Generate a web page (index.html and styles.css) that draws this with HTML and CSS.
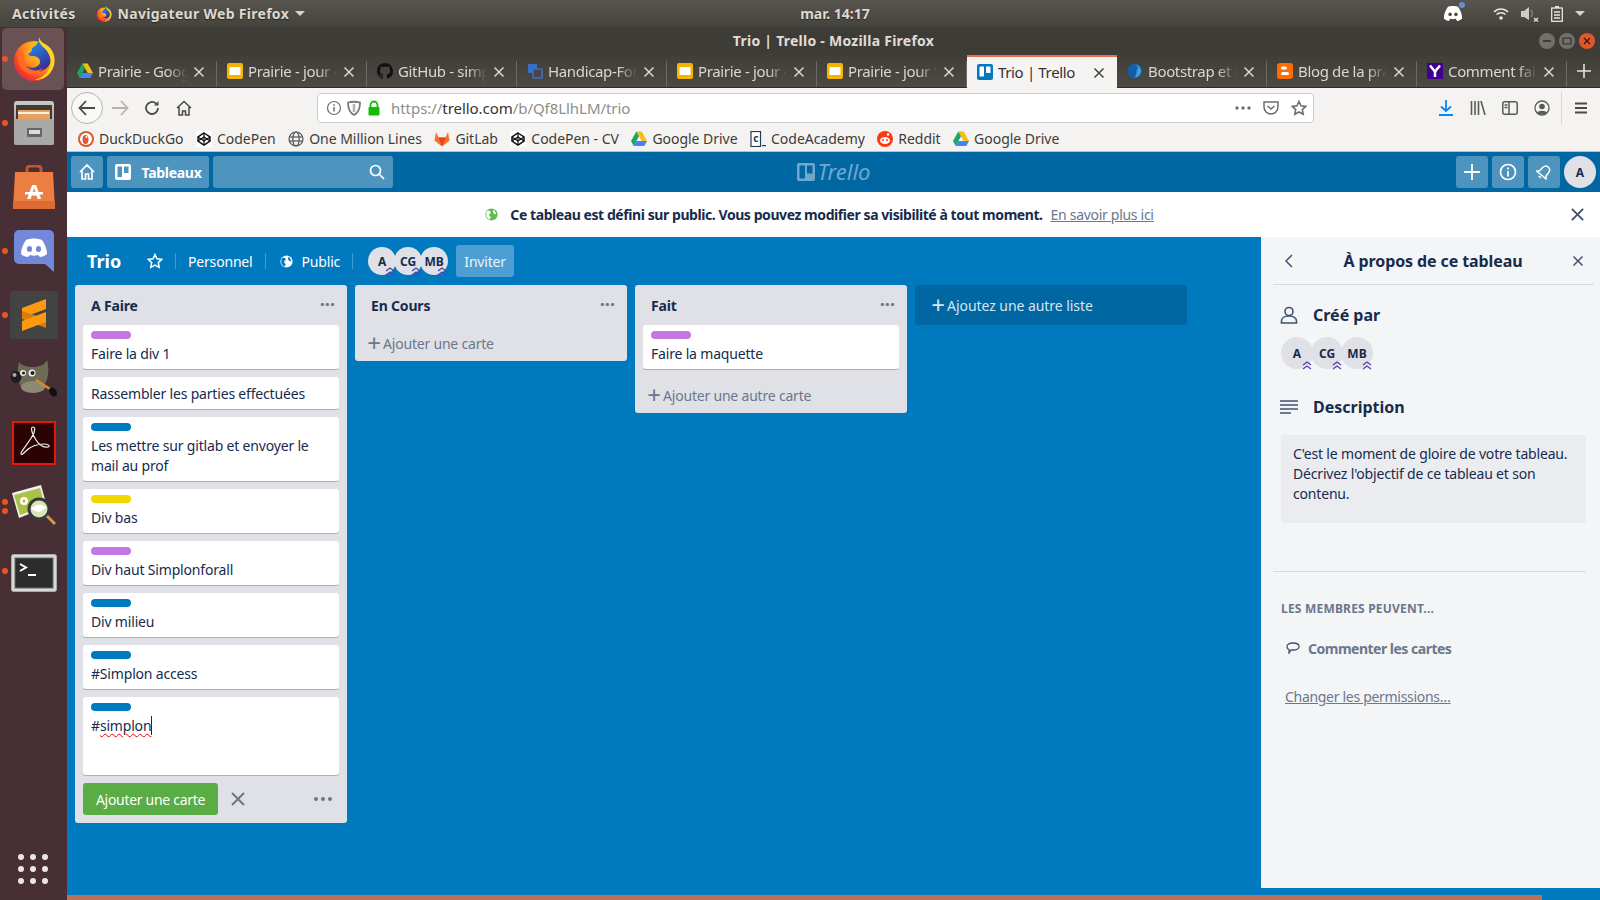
FILE: index.html
```html
<!DOCTYPE html>
<html lang="fr">
<head>
  <meta charset="UTF-8">
  <title>Trio | Trello</title>
  <link rel="stylesheet" href="styles.css">
</head>
<body>

  <svg class="defs" width="0" height="0">
    <defs>
      <radialGradient id="ffOrange" cx="0.75" cy="0.2" r="1">
        <stop offset="0" stop-color="#ffe11a"/>
        <stop offset="0.45" stop-color="#ff9a1f"/>
        <stop offset="0.8" stop-color="#f5392a"/>
        <stop offset="1" stop-color="#d8166a"/>
      </radialGradient>
      <linearGradient id="ffBlue" x1="0" y1="0" x2="0.6" y2="1">
        <stop offset="0" stop-color="#1f9bf0"/>
        <stop offset="1" stop-color="#3a2a96"/>
      </linearGradient>
      <linearGradient id="metal" x1="0" y1="0" x2="0" y2="1">
        <stop offset="0" stop-color="#c9c9c7"/>
        <stop offset="1" stop-color="#8b8b89"/>
      </linearGradient>
      <symbol id="i-firefox" viewBox="0 0 44 44">
        <circle cx="22" cy="24" r="20" fill="url(#ffOrange)"/>
        <path d="M26 5c9 1 15 10 13 19-2 8-11 13-19 10-3-1-5-3-6-5 5 3 12 2 14-3 1-4-3-7-7-7-2 0-4 0-5-2 3-1 4-3 4-6 2-1 5-3 6-6z" fill="url(#ffBlue)"/>
        <path d="M27 0c1 6 8 7 12 12 5 7 5 17-1 24-4 5-10 7-15 7 7-2 13-7 15-14 2-9-2-15-7-19-3-3-5-6-4-10z" fill="#ffd41f"/>
        <path d="M14 29c4 5 12 6 17 2-3 6-14 8-20 2-6-6-6-16-1-21 0 3 1 5 3 7-2 3-1 7 1 10z" fill="#ff6a1f"/>
      </symbol>
      <symbol id="i-cabinet" viewBox="0 0 40 44">
        <rect x="0" y="0" width="40" height="44" rx="3" fill="url(#metal)"/>
        <rect x="2" y="4" width="36" height="15" fill="#3d3a38"/>
        <rect x="4" y="9" width="32" height="10" fill="#e8a05a"/>
        <rect x="4" y="11" width="31" height="2" fill="#fff3e0"/>
        <rect x="0" y="18" width="40" height="26" rx="2" fill="#a9a9a7"/>
        <rect x="13" y="27" width="15" height="9" rx="1" fill="#666"/>
        <rect x="15" y="29" width="11" height="4" fill="#ddd"/>
      </symbol>
      <symbol id="i-bag" viewBox="0 0 42 44">
        <path d="M14 8V4a3 3 0 013-3h8a3 3 0 013 3v4" fill="none" stroke="#c7552a" stroke-width="3"/>
        <path d="M2 7h38l2 37H0z" fill="#ec7d43"/>
        <rect x="0" y="36" width="42" height="8" fill="#e06a33"/>
        <text x="21" y="34" text-anchor="middle" class="bag-a">A</text>
        <rect x="12" y="27" width="18" height="2.500" fill="#fff"/>
      </symbol>
      <symbol id="i-discord" viewBox="0 0 40 42">
        <path d="M5 0h30a5 5 0 015 5v37l-9-8H5a5 5 0 01-5-5V5a5 5 0 015-5z" fill="#7289da"/>
        <path d="M12 10c5-2 11-2 16 0 3 4 5 9 5 14-2 2-5 3-7 3l-2-2c-3 1-5 1-8 0l-2 2c-2 0-5-1-7-3 0-5 2-10 5-14z" fill="#fff"/>
        <ellipse cx="15.500" cy="19" rx="2.600" ry="3" fill="#7289da"/>
        <ellipse cx="24.500" cy="19" rx="2.600" ry="3" fill="#7289da"/>
      </symbol>
      <symbol id="i-discord-mono" viewBox="0 0 24 18">
        <path d="M6 1c4-1.500 8-1.500 12 0 3 4 5 9 5 14-2 2-4 3-6 3l-2-3c-2 1-4 1-6 0l-2 3c-2 0-4-1-6-3 0-5 2-10 5-14z" fill="#fff"/>
        <ellipse cx="8.500" cy="10" rx="2" ry="2.300" fill="#4c4a44"/>
        <ellipse cx="15.500" cy="10" rx="2" ry="2.300" fill="#4c4a44"/>
      </symbol>
      <symbol id="i-sublime" viewBox="0 0 48 48">
        <rect width="48" height="48" rx="3" fill="#434343"/>
        <polygon points="12,17 36,8 36,18 12,27" fill="#ff9a10"/>
        <polygon points="12,20 36,28 36,37 12,28" fill="#d97c0a"/>
        <polygon points="12,30 36,21 36,31 12,40" fill="#ff9a10"/>
      </symbol>
      <symbol id="i-gimp" viewBox="0 0 48 42">
        <path d="M9 4c4 5 11 5 17 5 5-1 9-3 11-7 3 10 1 22-5 28-6 6-16 5-21-1C7 22 7 12 9 4z" fill="#6d6a55"/>
        <ellipse cx="23" cy="29" rx="12" ry="6" fill="#8d8a74"/>
        <ellipse cx="6" cy="19" rx="5.500" ry="6" fill="#1d1d1d"/>
        <ellipse cx="4.500" cy="17" rx="2" ry="2" fill="#aaa"/>
        <circle cx="13" cy="15" r="3" fill="#eee"/>
        <circle cx="22" cy="15" r="3.500" fill="#eee"/>
        <circle cx="13.500" cy="15" r="1.600" fill="#222"/>
        <circle cx="22.500" cy="15" r="2" fill="#222"/>
        <line x1="26" y1="22" x2="40" y2="31" stroke="#d98a2b" stroke-width="2.500"/>
        <ellipse cx="43" cy="34" rx="3.500" ry="5" fill="#111" transform="rotate(-35 43 34)"/>
      </symbol>
      <symbol id="i-acrobat" viewBox="0 0 44 44">
        <rect x="1" y="1" width="42" height="42" fill="#2b0303" stroke="#e5170b" stroke-width="2"/>
        <path d="M9 32c3-6 8-10 13-20 1-4 1-6-1-6-3 0-1 7 3 13 3 5 8 8 12 7 3-1 0-3-4-3-7 0-14 3-18 7-3 3-5 5-5 2z" fill="none" stroke="#eee" stroke-width="1.200"/>
      </symbol>
      <symbol id="i-viewer" viewBox="0 0 44 44">
        <polygon points="0,8 29,0 35,22 7,33" fill="#f2f2ea"/>
        <polygon points="2,10 28,3 33,21 8,30" fill="#a9c14b"/>
        <circle cx="12" cy="16" r="4" fill="#fff"/>
        <circle cx="12" cy="16" r="1.500" fill="#f0a020"/>
        <circle cx="27" cy="24" r="10" fill="#d9e4b6" stroke="#38393a" stroke-width="3"/>
        <path d="M19 24c3-4 7-5 10-4 2 0 4 2 6 3-3 0-6 4-8 4-3 0-5-2-8-3z" fill="#fff"/>
        <line x1="35" y1="31" x2="43" y2="39" stroke="#d19a4c" stroke-width="3"/>
      </symbol>
      <symbol id="i-terminal" viewBox="0 0 46 38">
        <rect x="0.500" y="0.500" width="45" height="37" rx="2" fill="#d8d8d6" stroke="#aaa"/>
        <rect x="4" y="4" width="38" height="30" fill="#2c2c2c" stroke="#666"/>
        <polyline points="9,10 15,13.500 9,17" fill="none" stroke="#fff" stroke-width="2"/>
        <rect x="17" y="20" width="8" height="2" fill="#fff"/>
      </symbol>
      <symbol id="i-drive" viewBox="0 0 16 15">
        <polygon points="5.300,0 10.700,0 16,9.500 10.700,9.500" fill="#f9bc15"/>
        <polygon points="5.300,0 8,4.800 2.700,14.500 0,9.500" fill="#1fa463"/>
        <polygon points="5.400,9.500 16,9.500 13.300,14.500 2.700,14.500" fill="#4285f4"/>
      </symbol>
      <symbol id="i-slides" viewBox="0 0 16 16">
        <rect width="16" height="16" rx="2" fill="#f4b400"/>
        <rect x="2.500" y="4" width="11" height="8" fill="#fff"/>
      </symbol>
      <symbol id="i-trello" viewBox="0 0 16 16">
        <rect width="16" height="16" rx="2" fill="#0079bf"/>
        <rect x="2.500" y="2.500" width="4.500" height="10" rx="0.500" fill="#fff"/>
        <rect x="9" y="2.500" width="4.500" height="6.500" rx="0.500" fill="#fff"/>
      </symbol>
      <symbol id="i-github" viewBox="0 0 16 16">
        <path fill="#111" d="M8 0C3.580 0 0 3.580 0 8c0 3.540 2.290 6.530 5.470 7.590.4.070.55-.17.55-.38 0-.19-.01-.82-.01-1.490-2.010.37-2.530-.49-2.690-.94-.09-.23-.48-.94-.82-1.130-.28-.15-.68-.52-.01-.53.63-.01 1.080.58 1.230.82.72 1.210 1.870.87 2.330.66.070-.52.28-.87.51-1.070-1.780-.2-3.640-.89-3.640-3.950 0-.87.31-1.590.82-2.150-.08-.2-.36-1.020.08-2.120 0 0 .67-.21 2.200.82.64-.18 1.320-.27 2-.27s1.360.09 2 .27c1.530-1.040 2.200-.82 2.200-.82.44 1.100.16 1.920.08 2.120.51.56.82 1.270.82 2.150 0 3.070-1.870 3.750-3.650 3.950.29.25.54.73.54 1.480 0 1.070-.01 1.930-.01 2.200 0 .21.15.46.55.38A8.013 8.013 0 0016 8c0-4.420-3.580-8-8-8z"/>
      </symbol>
      <symbol id="i-squares" viewBox="0 0 16 16">
        <rect x="1" y="1" width="9" height="9" fill="#3b6fc4"/>
        <rect x="6" y="6" width="9" height="9" fill="#4a4740" stroke="#3b6fc4" stroke-width="1.500"/>
      </symbol>
      <symbol id="i-earth" viewBox="0 0 16 16">
        <circle cx="8" cy="8" r="7.500" fill="#125fa8"/>
        <path d="M8 1.500c3 1 3.500 3.500 2 5.500-1 1 0 3-1 5-.5 1-1 2-1.500 2.500 3.500 0 6.500-3 6.500-6.500S11 1.500 8 1.500z" fill="#4f9bd8"/>
      </symbol>
      <symbol id="i-blogger" viewBox="0 0 16 16">
        <rect width="16" height="16" rx="3" fill="#ff6d00"/>
        <rect x="4" y="3.500" width="6" height="3" rx="1.500" fill="#fff"/>
        <rect x="4" y="9" width="8" height="3" rx="1.500" fill="#fff"/>
      </symbol>
      <symbol id="i-yahoo" viewBox="0 0 16 16">
        <rect width="16" height="16" fill="#410093"/>
        <polyline points="3,2.500 8,8.500 13,2.500" fill="none" stroke="#fff" stroke-width="2.500"/>
        <line x1="8" y1="8" x2="8" y2="14" stroke="#fff" stroke-width="2.500"/>
      </symbol>
      <symbol id="i-ddg" viewBox="0 0 16 16">
        <circle cx="8" cy="8" r="8" fill="#de5833"/>
        <circle cx="8" cy="8" r="6" fill="#fff"/>
        <ellipse cx="7.500" cy="8.500" rx="3" ry="4.500" fill="#de5833"/>
        <circle cx="8.500" cy="6" r="1" fill="#fff"/>
      </symbol>
      <symbol id="i-codepen" viewBox="0 0 16 16">
        <rect width="16" height="16" fill="#fff"/>
        <polygon points="8,2 14,6 14,10 8,14 2,10 2,6" fill="none" stroke="#111" stroke-width="1.500"/>
        <polyline points="2,6 8,10 14,6" fill="none" stroke="#111" stroke-width="1.200"/>
        <polyline points="2,10 8,6 14,10" fill="none" stroke="#111" stroke-width="1.200"/>
        <line x1="8" y1="2" x2="8" y2="14" stroke="#111" stroke-width="1.200"/>
      </symbol>
      <symbol id="i-web" viewBox="0 0 16 16">
        <g fill="none" stroke="#555" stroke-width="1.200">
          <circle cx="8" cy="8" r="7"/>
          <ellipse cx="8" cy="8" rx="3.200" ry="7"/>
          <line x1="1" y1="6" x2="15" y2="6"/>
          <line x1="1" y1="10" x2="15" y2="10"/>
        </g>
      </symbol>
      <symbol id="i-gitlab" viewBox="0 0 16 16">
        <polygon points="8,15.500 0.500,9.500 2,1 4.500,6.500 11.500,6.500 14,1 15.500,9.500" fill="#fc6d26"/>
        <polygon points="8,15.500 4.500,6.500 11.500,6.500" fill="#e24329"/>
      </symbol>
      <symbol id="i-academy" viewBox="0 0 16 16">
        <rect x="1" y="0.500" width="9.500" height="15" fill="#fff" stroke="#203d5b" stroke-width="1.200"/>
        <text x="5.700" y="11" text-anchor="middle" class="academy-c">c</text>
        <rect x="12" y="14" width="4" height="1.200" fill="#203d5b"/>
      </symbol>
      <symbol id="i-reddit" viewBox="0 0 16 16">
        <circle cx="8" cy="8" r="8" fill="#ff3a0f"/>
        <ellipse cx="8" cy="9.500" rx="5" ry="3.500" fill="#fff"/>
        <circle cx="6" cy="9" r="1" fill="#ff3a0f"/>
        <circle cx="10" cy="9" r="1" fill="#ff3a0f"/>
        <circle cx="11" cy="3.500" r="1.200" fill="#fff"/>
      </symbol>
      <symbol id="i-x" viewBox="0 0 12 12">
        <path d="M1.500 1.500l9 9M10.500 1.500l-9 9" fill="none" stroke="currentColor" stroke-width="1.500"/>
      </symbol>
      <symbol id="i-globe-ui" viewBox="0 0 16 16">
        <circle cx="8" cy="8" r="7.500" fill="currentColor"/>
        <path class="globe-land" d="M3 3.500c2 0 4 .5 4 2s-2 1.500-2 3 2 1.500 2 3-1 2-2 2.500C3 13 1.500 11 1.500 8c0-2 .5-3.500 1.500-4.500zM10 2.500c2 .5 3.500 2.500 3.500 5-1 .5-2.500-.5-3-1.500s-1-2.500-.5-3.500z"/>
      </symbol>
      <symbol id="i-admin" viewBox="0 0 10 10">
        <path d="M1 5l4-3 4 3M1 9l4-3 4 3" fill="none" stroke="#5243aa" stroke-width="1.300"/>
      </symbol>
    </defs>
  </svg>

  <!-- Barre du haut -->
  <header class="topbar">
    <span class="top-item activities">Activités</span>
    <span class="top-item app">
      <svg class="ic16"><use href="#i-firefox"/></svg>
      Navigateur Web Firefox
      <span class="caret"></span>
    </span>
    <span class="clock">mar. 14:17</span>
    <div class="tray">
      <span class="tray-discord">
        <svg width="20" height="15"><use href="#i-discord-mono"/></svg>
        <span class="tray-dot"></span>
      </span>
      <svg class="tray-wifi" width="16" height="14" viewBox="0 0 16 14" fill="none" stroke="#e8e6e0" stroke-width="1.500">
        <path d="M1 5c4-4 10-4 14 0M3.500 7.500c2.500-2.500 6.500-2.500 9 0"/>
        <circle cx="8" cy="11" r="1.800" fill="#e8e6e0" stroke="none"/>
      </svg>
      <svg class="tray-vol" width="18" height="16" viewBox="0 0 18 16">
        <polygon points="0,5 3,5 8,1 8,14 3,11 0,11" fill="#cfccc6"/>
        <path d="M10 4c1.500 2 1.500 5 0 7" fill="none" stroke="#8a8780" stroke-width="1.300"/>
        <path d="M13 12l4 3.500M17 12l-4 3.500" stroke="#e8e6e0" stroke-width="1.300"/>
      </svg>
      <svg class="tray-bat" width="12" height="16" viewBox="0 0 12 16" fill="none" stroke="#e8e6e0" stroke-width="1.300">
        <rect x="0.700" y="2" width="10.600" height="13.300"/>
        <rect x="4" y="0" width="4" height="2" fill="#e8e6e0" stroke="none"/>
        <path d="M3 6h6M3 9h6M3 12h6"/>
      </svg>
      <span class="caret"></span>
    </div>
  </header>

  <div class="desktop">

    <!-- Dock -->
    <aside class="dock">
      <div class="dock-item active"><span class="run"></span><svg width="44" height="44"><use href="#i-firefox"/></svg></div>
      <div class="dock-item"><span class="run"></span><svg width="40" height="44"><use href="#i-cabinet"/></svg></div>
      <div class="dock-item"><svg width="42" height="44"><use href="#i-bag"/></svg></div>
      <div class="dock-item"><span class="run"></span><svg width="40" height="42"><use href="#i-discord"/></svg></div>
      <div class="dock-item"><span class="run"></span><svg width="48" height="48"><use href="#i-sublime"/></svg></div>
      <div class="dock-item"><svg width="48" height="42"><use href="#i-gimp"/></svg></div>
      <div class="dock-item"><svg width="44" height="44"><use href="#i-acrobat"/></svg></div>
      <div class="dock-item"><span class="run two"></span><span class="run"></span><svg width="44" height="44"><use href="#i-viewer"/></svg></div>
      <div class="dock-item terminal"><span class="run"></span><svg width="46" height="38"><use href="#i-terminal"/></svg></div>
      <div class="dock-grid">
        <span></span><span></span><span></span>
        <span></span><span></span><span></span>
        <span></span><span></span><span></span>
      </div>
    </aside>

    <main class="window">
      <div class="titlebar">
        <span>Trio | Trello - Mozilla Firefox</span>
        <div class="win-btns">
          <span class="win-btn"><svg width="10" height="10" viewBox="0 0 10 10"><path d="M1 5h8" stroke="#2f2d29" stroke-width="1.500"/></svg></span>
          <span class="win-btn"><svg width="10" height="10" viewBox="0 0 10 10"><rect x="1" y="2" width="8" height="6" rx="1" fill="none" stroke="#2f2d29" stroke-width="1.200"/></svg></span>
          <span class="win-btn close"><svg width="10" height="10" viewBox="0 0 10 10"><path d="M2 2l6 6M8 2l-6 6" stroke="#3a1a10" stroke-width="1.300"/></svg></span>
        </div>
      </div>

      <!-- Onglets -->
      <div class="tabs">
        <div class="tab"><svg class="ic16"><use href="#i-drive"/></svg><span class="tab-title">Prairie - Google Drive</span><svg class="tab-x"><use href="#i-x"/></svg></div>
        <div class="tab"><svg class="ic16"><use href="#i-slides"/></svg><span class="tab-title">Prairie - jour 4 - Google</span><svg class="tab-x"><use href="#i-x"/></svg></div>
        <div class="tab"><svg class="ic16"><use href="#i-github"/></svg><span class="tab-title">GitHub - simplon</span><svg class="tab-x"><use href="#i-x"/></svg></div>
        <div class="tab"><svg class="ic16"><use href="#i-squares"/></svg><span class="tab-title">Handicap-Forall</span><svg class="tab-x"><use href="#i-x"/></svg></div>
        <div class="tab"><svg class="ic16"><use href="#i-slides"/></svg><span class="tab-title">Prairie - jour 4 - Google</span><svg class="tab-x"><use href="#i-x"/></svg></div>
        <div class="tab"><svg class="ic16"><use href="#i-slides"/></svg><span class="tab-title">Prairie - jour 5 - Google</span><svg class="tab-x"><use href="#i-x"/></svg></div>
        <div class="tab current"><svg class="ic16"><use href="#i-trello"/></svg><span class="tab-title">Trio | Trello</span><svg class="tab-x"><use href="#i-x"/></svg></div>
        <div class="tab"><svg class="ic16"><use href="#i-earth"/></svg><span class="tab-title">Bootstrap et les</span><svg class="tab-x"><use href="#i-x"/></svg></div>
        <div class="tab"><svg class="ic16"><use href="#i-blogger"/></svg><span class="tab-title">Blog de la prairie</span><svg class="tab-x"><use href="#i-x"/></svg></div>
        <div class="tab"><svg class="ic16"><use href="#i-yahoo"/></svg><span class="tab-title">Comment faire un</span><svg class="tab-x"><use href="#i-x"/></svg></div>
        <div class="tab-new"><svg width="14" height="14" viewBox="0 0 14 14"><path d="M7 0v14M0 7h14" stroke="#e4e2dc" stroke-width="1.600"/></svg></div>
      </div>

      <!-- Barre de navigation -->
      <div class="toolbar">
        <button class="nav-btn back">
          <svg width="18" height="16" viewBox="0 0 18 16" fill="none" stroke="#4a4a48" stroke-width="1.800"><path d="M8 1L1.500 8 8 15M2 8h15"/></svg>
        </button>
        <button class="nav-btn">
          <svg width="18" height="16" viewBox="0 0 18 16" fill="none" stroke="#b5b4b2" stroke-width="1.800"><path d="M10 1l6.500 7L10 15M16 8H1"/></svg>
        </button>
        <button class="nav-btn">
          <svg width="16" height="16" viewBox="0 0 16 16" fill="none" stroke="#4a4a48" stroke-width="1.800"><path d="M14 8a6 6 0 11-2-4.500"/><path d="M14.500 1v4.500H10" fill="#4a4a48" stroke="none"/></svg>
        </button>
        <button class="nav-btn">
          <svg width="16" height="16" viewBox="0 0 16 16" fill="none" stroke="#4a4a48" stroke-width="1.500"><path d="M1 8l7-6.500L15 8M3 7v8h3.500v-4h3v4H13V7"/></svg>
        </button>

        <div class="urlbar">
          <svg class="ic16" viewBox="0 0 16 16" fill="none" stroke="#6d6d6b" stroke-width="1.200"><circle cx="8" cy="8" r="6.500"/><path d="M8 7v4.500M8 4.300v1.400" stroke-width="1.500"/></svg>
          <svg class="ic16" viewBox="0 0 16 16" fill="none" stroke="#7a7a78" stroke-width="1.800"><path d="M2 2.500c4-1 8-1 12 0 0 6-1 10-6 12.500-5-2.500-6-6.500-6-12.500z"/><path d="M8 4v8" stroke-width="2.500" stroke="#b0b0ae"/></svg>
          <svg class="ic16" viewBox="0 0 16 16"><path d="M4.500 7V5a3.500 3.500 0 017 0v2" fill="none" stroke="#12bc00" stroke-width="1.800"/><rect x="2.500" y="7" width="11" height="8.500" rx="1" fill="#12bc00"/></svg>
          <span class="url">https://<b>trello.com</b>/b/Qf8LlhLM/trio</span>
          <button class="url-btn"><svg width="16" height="4" viewBox="0 0 16 4" fill="#6d6d6b"><circle cx="2" cy="2" r="1.700"/><circle cx="8" cy="2" r="1.700"/><circle cx="14" cy="2" r="1.700"/></svg></button>
          <button class="url-btn"><svg width="16" height="14" viewBox="0 0 16 14" fill="none" stroke="#6d6d6b" stroke-width="1.500"><path d="M1 1h14v5a7 7 0 01-14 0z"/><path d="M4.500 5L8 8l3.500-3"/></svg></button>
          <button class="url-btn"><svg width="16" height="16" viewBox="0 0 16 16" fill="none" stroke="#6d6d6b" stroke-width="1.600"><path d="M8 1.500l2 4.300 4.700.6-3.400 3.200.9 4.700L8 12l-4.200 2.300.9-4.700L1.300 6.400 6 5.800z"/></svg></button>
        </div>

        <div class="tools">
          <button class="nav-btn"><svg width="14" height="16" viewBox="0 0 14 16" fill="none" stroke="#0a84ff" stroke-width="1.800"><path d="M7 0v11M2 6.500L7 11l5-4.500M0 15h14"/></svg></button>
          <button class="nav-btn"><svg width="16" height="14" viewBox="0 0 16 14" fill="none" stroke="#5a5a58" stroke-width="1.600"><path d="M1.500 0v14M5 0v14M8.500 0v14M11 0l4 14"/></svg></button>
          <button class="nav-btn"><svg width="16" height="14" viewBox="0 0 16 14" fill="none" stroke="#5a5a58" stroke-width="1.500"><rect x="0.800" y="0.800" width="14.400" height="12.400" rx="2"/><path d="M7 1v12M2.500 4h3M2.500 6.500h3"/></svg></button>
          <button class="nav-btn"><svg width="16" height="16" viewBox="0 0 16 16"><circle cx="8" cy="8" r="7" fill="none" stroke="#5a5a58" stroke-width="1.300"/><circle cx="8" cy="6.500" r="2.800" fill="#5a5a58"/><path d="M3 13c1-3 9-3 10 0-2 2-8 2-10 0z" fill="#5a5a58"/></svg></button>
          <span class="tool-sep"></span>
          <button class="nav-btn"><svg width="14" height="12" viewBox="0 0 14 12" stroke="#4a4a48" stroke-width="1.800"><path d="M1 1.500h12M1 6h12M1 10.500h12"/></svg></button>
        </div>
      </div>

      <!-- Marque-pages -->
      <div class="bookmarks">
        <a class="bm"><svg class="ic16"><use href="#i-ddg"/></svg>DuckDuckGo</a>
        <a class="bm"><svg class="ic16"><use href="#i-codepen"/></svg>CodePen</a>
        <a class="bm"><svg class="ic16"><use href="#i-web"/></svg>One Million Lines</a>
        <a class="bm"><svg class="ic16"><use href="#i-gitlab"/></svg>GitLab</a>
        <a class="bm"><svg class="ic16"><use href="#i-codepen"/></svg>CodePen - CV</a>
        <a class="bm"><svg class="ic16"><use href="#i-drive"/></svg>Google Drive</a>
        <a class="bm"><svg class="ic16"><use href="#i-academy"/></svg>CodeAcademy</a>
        <a class="bm"><svg class="ic16"><use href="#i-reddit"/></svg>Reddit</a>
        <a class="bm"><svg class="ic16"><use href="#i-drive"/></svg>Google Drive</a>
      </div>

      <!-- Page Trello -->
      <div class="page">
        <nav class="trello-nav">
          <div class="nav-left">
            <button class="tbtn square">
              <svg width="18" height="18" viewBox="0 0 18 18" fill="none" stroke="#fff" stroke-width="1.700"><path d="M2 9l7-7 7 7M4 7v9h3.500v-5h3v5H14V7"/></svg>
            </button>
            <button class="tbtn boards">
              <svg width="16" height="16" viewBox="0 0 16 16"><rect width="16" height="16" rx="2" fill="#fff"/><rect x="2.500" y="2.500" width="4.500" height="10.500" fill="#4d95bf"/><rect x="9" y="2.500" width="4.500" height="6.500" fill="#4d95bf"/></svg>
              Tableaux
            </button>
            <div class="tsearch">
              <svg width="16" height="16" viewBox="0 0 16 16" fill="none" stroke="#fff" stroke-width="1.700"><circle cx="6.500" cy="6.500" r="5"/><path d="M10.500 10.500L15 15"/></svg>
            </div>
          </div>
          <div class="logo">
            <svg width="18" height="18" viewBox="0 0 18 18"><rect width="18" height="18" rx="2" fill="#6ea9cd"/><rect x="2.500" y="2.500" width="5.500" height="13" fill="#0067a3"/><rect x="10" y="2.500" width="5.500" height="8" fill="#0067a3"/></svg>
            <span>Trello</span>
          </div>
          <div class="nav-right">
            <button class="tbtn square"><svg width="16" height="16" viewBox="0 0 16 16" stroke="#fff" stroke-width="1.800"><path d="M8 0v16M0 8h16"/></svg></button>
            <button class="tbtn square"><svg width="18" height="18" viewBox="0 0 18 18" fill="none" stroke="#fff" stroke-width="1.700"><circle cx="9" cy="9" r="7.500"/><path d="M9 8v5.500M9 4.500v2"/></svg></button>
            <button class="tbtn square"><svg width="16" height="16" viewBox="0 0 16 16" fill="none" stroke="#fff" stroke-width="1.500"><g transform="rotate(40 8 8)"><path d="M8 1.500c-3 0-4 2-4 5v3l-2 2.500h12l-2-2.500v-3c0-3-1-5-4-5z"/><path d="M6.500 14.500h3"/></g></svg></button>
            <span class="avatar nav-avatar">A</span>
          </div>
        </nav>

        <div class="banner">
          <svg class="banner-globe"><use href="#i-globe-ui"/></svg>
          <b>Ce tableau est défini sur public. Vous pouvez modifier sa visibilité à tout moment.</b>
          <a class="banner-link">En savoir plus ici</a>
          <svg class="banner-x"><use href="#i-x"/></svg>
        </div>

        <div class="board-row">
          <section class="board">
            <div class="board-head">
              <h1>Trio</h1>
              <svg class="board-star" width="16" height="16" viewBox="0 0 16 16" fill="none" stroke="#fff" stroke-width="1.500"><path d="M8 1.500l2 4.300 4.700.6-3.400 3.200.9 4.700L8 12l-4.200 2.300.9-4.700L1.300 6.400 6 5.800z"/></svg>
              <span class="head-sep"></span>
              <span class="head-text">Personnel</span>
              <span class="head-sep"></span>
              <svg class="head-globe"><use href="#i-globe-ui"/></svg>
              <span class="head-text">Public</span>
              <span class="head-sep"></span>
              <div class="head-members">
                <span class="avatar small">A<svg class="admin"><use href="#i-admin"/></svg></span>
                <span class="avatar small">CG<svg class="admin"><use href="#i-admin"/></svg></span>
                <span class="avatar small">MB<svg class="admin"><use href="#i-admin"/></svg></span>
              </div>
              <button class="invite">Inviter</button>
            </div>

            <div class="lists">
              <div class="list">
                <div class="list-head">A Faire<span class="list-dots">···</span></div>
                <div class="cards">
                  <div class="card"><span class="label purple"></span>Faire la div 1</div>
                  <div class="card">Rassembler les parties effectuées</div>
                  <div class="card"><span class="label blue"></span>Les mettre sur gitlab et envoyer le mail au prof</div>
                  <div class="card"><span class="label yellow"></span>Div bas</div>
                  <div class="card"><span class="label purple"></span>Div haut Simplonforall</div>
                  <div class="card"><span class="label blue"></span>Div milieu</div>
                  <div class="card"><span class="label blue"></span>#Simplon access</div>
                  <div class="card editing"><span class="label blue"></span>#<span class="misspelt">simplon</span></div>
                </div>
                <div class="composer">
                  <button class="add-card">Ajouter une carte</button>
                  <svg class="composer-x"><use href="#i-x"/></svg>
                  <svg class="composer-dots" width="18" height="4" viewBox="0 0 18 4" fill="#6b778c"><circle cx="2" cy="2" r="2"/><circle cx="9" cy="2" r="2"/><circle cx="16" cy="2" r="2"/></svg>
                </div>
              </div>

              <div class="list">
                <div class="list-head">En Cours<span class="list-dots">···</span></div>
                <div class="list-foot"><span class="plus">+</span>Ajouter une carte</div>
              </div>

              <div class="list">
                <div class="list-head">Fait<span class="list-dots">···</span></div>
                <div class="cards">
                  <div class="card"><span class="label purple"></span>Faire la maquette</div>
                </div>
                <div class="list-foot spaced"><span class="plus">+</span>Ajouter une autre carte</div>
              </div>

              <div class="add-list"><span class="plus">+</span>Ajoutez une autre liste</div>
            </div>
          </section>

          <!-- Panneau de droite -->
          <aside class="side">
            <div class="side-head">
              <svg width="10" height="14" viewBox="0 0 10 14" fill="none" stroke="#42526e" stroke-width="1.500"><path d="M8 1L2 7l6 6"/></svg>
              <span>À propos de ce tableau</span>
              <svg class="side-x"><use href="#i-x"/></svg>
            </div>

            <div class="side-heading">
              <span class="side-icon"><svg width="18" height="18" viewBox="0 0 18 18" fill="none" stroke="#42526e" stroke-width="1.600"><circle cx="9" cy="5.500" r="4"/><path d="M1.500 17v-2c0-3 3-5 7.500-5s7.500 2 7.500 5v2z"/></svg></span>
              Créé par
            </div>
            <div class="side-members">
              <span class="avatar">A<svg class="admin"><use href="#i-admin"/></svg></span>
              <span class="avatar">CG<svg class="admin"><use href="#i-admin"/></svg></span>
              <span class="avatar">MB<svg class="admin"><use href="#i-admin"/></svg></span>
            </div>

            <div class="side-heading desc">
              <span class="side-icon"><svg width="18" height="16" viewBox="0 0 18 16" stroke="#42526e" stroke-width="1.700"><path d="M0 2h18M0 6h18M0 10h18M0 14h11"/></svg></span>
              Description
            </div>
            <p class="desc-box">C'est le moment de gloire de votre tableau. Décrivez l'objectif de ce tableau et son contenu.</p>

            <hr class="side-rule">
            <h3 class="side-label">LES MEMBRES PEUVENT...</h3>
            <div class="perm">
              <svg width="14" height="12" viewBox="0 0 14 12" fill="none" stroke="#42526e" stroke-width="1.300"><path d="M1 4.500C1 2.500 3 1 7 1s6 1.500 6 3.500S11 8 7 8H5l-2 3V7.500C1.500 7 1 6 1 4.500z"/></svg>
              Commenter les cartes
            </div>
            <a class="perm-link">Changer les permissions…</a>
          </aside>
        </div>

        <div class="hscroll"></div>
      </div>
    </main>
  </div>

</body>
</html>
```

FILE: styles.css
```css
* {
  box-sizing: border-box;
}

body {
  margin: 0;
  width: 1600px;
  height: 900px;
  overflow: hidden;
  font-family: "Noto Sans", "Open Sans", sans-serif;
  font-size: 14px;
  letter-spacing: -0.18px;
  color: #172b4d;
  background: #472f35;
}

button {
  font-family: inherit;
  letter-spacing: inherit;
  border: 0;
  background: none;
  padding: 0;
}

.defs {
  position: absolute;
}

.ic16 {
  width: 16px;
  height: 16px;
  flex: none;
}

.bag-a {
  font: bold 20px "Noto Sans", sans-serif;
  fill: #fff;
}

.academy-c {
  font: bold 10px "Noto Sans", sans-serif;
  fill: #203d5b;
}

.globe-land {
  fill: var(--land, #fff);
}

/* Top bar */
.topbar {
  height: 27px;
  display: flex;
  align-items: center;
  position: relative;
  background: linear-gradient(#58554e, #45433d);
  color: #dcd9d2;
  font-weight: 700;
  letter-spacing: 0.3px;
  text-shadow: 0 1px 1px rgba(0, 0, 0, 0.5);
}

.activities {
  margin-left: 12px;
}

.app {
  display: flex;
  align-items: center;
  gap: 6px;
  margin-left: 20px;
}

.caret {
  width: 0;
  height: 0;
  border-left: 5px solid transparent;
  border-right: 5px solid transparent;
  border-top: 5px solid #d8d5ce;
}

.clock {
  position: absolute;
  left: 795px;
  width: 80px;
  text-align: center;
  letter-spacing: 0;
}

.tray {
  margin-left: auto;
  display: flex;
  align-items: center;
  padding-right: 15px;
}

.tray-discord {
  position: relative;
  display: flex;
}

.tray-dot {
  position: absolute;
  top: -4px;
  right: -2px;
  width: 6px;
  height: 6px;
  border-radius: 50%;
  background: #6d8ad8;
}

.tray-wifi {
  margin-left: 30px;
}

.tray-vol {
  margin-left: 12px;
}

.tray-bat {
  margin-left: 12px;
}

.tray .caret {
  margin-left: 12px;
}

/* Dock */
.desktop {
  display: flex;
  height: 873px;
}

.dock {
  width: 67px;
  flex: none;
  display: flex;
  flex-direction: column;
  background: #472f35;
}

.dock-item {
  height: 64px;
  flex: none;
  display: flex;
  align-items: center;
  justify-content: center;
  position: relative;
  padding-left: 1px;
}

.dock-item.terminal {
  padding-top: 3px;
}

.dock-item.active::before {
  content: "";
  position: absolute;
  top: 1px;
  left: 2px;
  width: 62px;
  height: 62px;
  border-radius: 5px;
  background: #6a5254;
}

.dock-item svg {
  position: relative;
}

.run {
  position: absolute;
  left: 2px;
  top: 29px;
  width: 6px;
  height: 6px;
  border-radius: 50%;
  background: #e95420;
}

.run.two {
  top: 24px;
}

.dock-item .run + .run {
  top: 33px;
}

.dock-grid {
  margin-top: auto;
  margin-bottom: 16px;
  margin-left: 18px;
  display: grid;
  grid-template-columns: repeat(3, 6px);
  gap: 6px;
}

.dock-grid span {
  width: 6px;
  height: 6px;
  border-radius: 50%;
  background: #ece6e6;
}

/* Window */
.window {
  flex: 1;
  min-width: 0;
  display: flex;
  flex-direction: column;
}

.titlebar {
  height: 28px;
  padding-bottom: 2px;
  display: flex;
  align-items: center;
  justify-content: center;
  position: relative;
  background: #3e3c37;
  color: #e0ddd5;
  font-weight: 700;
  letter-spacing: 0.25px;
}

.win-btns {
  position: absolute;
  right: 5px;
  top: 6px;
  display: flex;
  gap: 4px;
}

.win-btn {
  width: 16px;
  height: 16px;
  border-radius: 50%;
  background: #72706a;
  display: flex;
  align-items: center;
  justify-content: center;
}

.win-btn.close {
  background: #e2562c;
}

/* Tabs */
.tabs {
  height: 33px;
  display: flex;
  background: linear-gradient(#403e38, #4c4a43);
  border-bottom: 1px solid #2e2c28;
}

.tab {
  width: 150px;
  height: 32px;
  margin-top: 1px;
  display: flex;
  align-items: center;
  padding: 0 12px 2px 10px;
  color: #dad7d0;
  position: relative;
  font-size: 15px;
  letter-spacing: -0.35px;
}

.tab::after {
  content: "";
  position: absolute;
  right: 0;
  top: 5px;
  bottom: 1px;
  width: 1px;
  background: #6e6b64;
}

.tab.current {
  margin-top: 0;
  height: 33px;
  background: #f5f4f2;
  border-top: 2px solid #e9714a;
  color: #333;
}

.tab.current::after {
  display: none;
}

.tab-title {
  flex: 1;
  margin-left: 5px;
  white-space: nowrap;
  overflow: hidden;
  -webkit-mask-image: linear-gradient(to right, #000 78%, transparent);
  mask-image: linear-gradient(to right, #000 78%, transparent);
}

.tab.current .tab-title {
  -webkit-mask-image: none;
  mask-image: none;
}

.tab-x {
  width: 12px;
  height: 12px;
  flex: none;
  margin-left: 6px;
  margin-top: 2px;
  color: #dad7d0;
}

.tab.current .tab-x {
  color: #444;
}

.tab-new {
  flex: 1;
  display: flex;
  align-items: center;
  justify-content: center;
}

/* Toolbar */
.toolbar {
  height: 39px;
  display: flex;
  align-items: center;
  padding: 0 3px 0 4px;
  background: #f4f3f1;
}

.nav-btn {
  width: 32px;
  height: 32px;
  flex: none;
  display: flex;
  align-items: center;
  justify-content: center;
}

.nav-btn.back {
  border: 1px solid #b5b4b1;
  border-radius: 50%;
  background: #f9f9f8;
  margin-right: 1px;
}

.urlbar {
  width: 997px;
  height: 30px;
  margin-left: 117px;
  display: flex;
  align-items: center;
  gap: 4px;
  padding-left: 8px;
  background: #fff;
  border: 1px solid #cbcac7;
  border-radius: 4px;
  color: #8e8e8c;
  font-size: 15px;
}

.url {
  flex: 1;
  margin-left: 5px;
  letter-spacing: -0.05px;
}

.url b {
  font-weight: 400;
  color: #333;
}

.url-btn {
  width: 28px;
  margin-left: -4px;
  display: flex;
  justify-content: center;
}

.tools {
  margin-left: auto;
  display: flex;
  align-items: center;
}

.tool-sep {
  width: 1px;
  height: 32px;
  margin: 0 3px;
  background: #d8d7d4;
}

/* Bookmarks */
.bookmarks {
  height: 25px;
  display: flex;
  align-items: center;
  gap: 12.5px;
  padding: 0 0 2px 11px;
  background: #f4f3f1;
  color: #3c3c3a;
  letter-spacing: -0.03px;
}

.bm {
  display: flex;
  align-items: center;
  gap: 5px;
}

/* Trello page */
.page {
  flex: 1;
  min-height: 0;
  display: flex;
  flex-direction: column;
  background: #0079bf;
}

.trello-nav {
  height: 40px;
  flex: none;
  display: flex;
  align-items: center;
  padding: 0 4px;
  background: #0067a3;
  box-shadow: 0 -1px 0 #a9c6d8;
}

.nav-left,
.nav-right {
  flex: 1;
  display: flex;
  gap: 4px;
}

.nav-right {
  justify-content: flex-end;
}

.tbtn {
  height: 32px;
  border-radius: 3px;
  background: #4d95bf;
  color: #fff;
  display: flex;
  align-items: center;
  justify-content: center;
}

.tbtn.square {
  width: 32px;
}

.tbtn.boards {
  width: 102px;
  gap: 11px;
  font-weight: 700;
  font-size: 14px;
  letter-spacing: -0.3px;
}

.tsearch {
  width: 180px;
  height: 32px;
  border-radius: 3px;
  background: #4d95bf;
  display: flex;
  align-items: center;
  justify-content: flex-end;
  padding-right: 8px;
}

.logo {
  display: flex;
  align-items: center;
  gap: 3px;
  color: #6ea9cd;
  font-size: 22px;
  font-weight: 400;
  font-style: italic;
  letter-spacing: 0;
}

.logo span {
  line-height: 1;
  margin-top: -2px;
}

.avatar {
  width: 32px;
  height: 32px;
  flex: none;
  border-radius: 50%;
  background: #dfe1e6;
  color: #172b4d;
  font-size: 12px;
  font-weight: 700;
  letter-spacing: 0;
  display: flex;
  align-items: center;
  justify-content: center;
  position: relative;
}

.avatar.small {
  width: 28px;
  height: 28px;
}

.admin {
  position: absolute;
  right: 1px;
  bottom: -1px;
  width: 10px;
  height: 10px;
}

.banner {
  height: 45px;
  flex: none;
  display: flex;
  align-items: center;
  justify-content: center;
  padding-right: 28px;
  position: relative;
  background: #fff;
}

.banner b {
  letter-spacing: -0.43px;
}

.banner-globe {
  width: 13px;
  height: 13px;
  margin-right: 12px;
  color: #61bd4f;
}

.banner-link {
  margin-left: 8px;
  color: #6b778c;
  letter-spacing: -0.3px;
  text-decoration: underline;
}

.banner-x {
  position: absolute;
  right: 15px;
  top: 15px;
  width: 15px;
  height: 15px;
  color: #42526e;
}

.board-row {
  height: 651px;
  flex: none;
  display: flex;
}

.board {
  flex: 1;
  min-width: 0;
}

.board-head {
  height: 48px;
  display: flex;
  align-items: center;
  padding-left: 20px;
  color: #fff;
}

.board-head h1 {
  margin: 0;
  width: 60px;
  font-size: 18px;
  font-weight: 700;
  letter-spacing: 0;
}

.board-star {
  margin-left: 0;
}

.head-sep {
  width: 1px;
  height: 16px;
  margin: 0 12px;
  background: rgba(255, 255, 255, 0.25);
}

.head-globe {
  width: 13px;
  height: 13px;
  margin: 0 9px 0 2px;
  color: #fff;
  --land: #0079bf;
}

.head-text {
  font-size: 14px;
}

.head-members {
  display: flex;
  margin-left: 3px;
}

.head-members .avatar + .avatar {
  margin-left: -2px;
}

.invite {
  width: 58px;
  height: 32px;
  margin-left: 8px;
  border-radius: 3px;
  background: #4d9fd3;
  color: #eaf4fa;
  font-size: 14px;
}

.lists {
  display: flex;
  align-items: flex-start;
  gap: 8px;
  padding-left: 8px;
}

.list {
  width: 272px;
  flex: none;
  border-radius: 3px;
  background: #dfe1e6;
}

.list-head {
  height: 40px;
  display: flex;
  align-items: center;
  justify-content: space-between;
  padding: 0 12px 0 16px;
  font-weight: 700;
  color: #172b4d;
}

.list-dots {
  font-size: 18px;
  letter-spacing: 0;
  color: #6b778c;
  margin-top: -3px;
  line-height: 1;
}

.cards {
  display: flex;
  flex-direction: column;
  gap: 8px;
  padding: 0 8px;
}

.card {
  padding: 7px 8px 5px;
  line-height: 20px;
  background: #fff;
  border-radius: 3px;
  box-shadow: 0 1px 0 rgba(9, 30, 66, 0.25);
}

.card.editing {
  height: 78px;
}

.label {
  display: block;
  width: 40px;
  height: 8px;
  margin: -1px 0 5px;
  border-radius: 4px;
}

.label.purple {
  background: #c377e0;
}

.label.blue {
  background: #0079bf;
}

.label.yellow {
  background: #f2d600;
}

.misspelt {
  border-right: 1px solid #172b4d;
  text-decoration: underline wavy #e00 1px;
  text-underline-offset: 2px;
}

.composer {
  height: 48px;
  display: flex;
  align-items: center;
  padding: 0 8px;
}

.add-card {
  width: 135px;
  height: 32px;
  border-radius: 3px;
  background: #5aac44;
  color: #fff;
  font-size: 14px;
  letter-spacing: -0.3px;
}

.composer-x {
  width: 16px;
  height: 16px;
  margin-left: 12px;
  color: #6b778c;
}

.composer-dots {
  margin-left: auto;
  margin-right: 7px;
}

.list-foot {
  height: 36px;
  display: flex;
  align-items: center;
  padding-left: 10px;
  color: #6b778c;
  letter-spacing: -0.2px;
}

.list-foot.spaced {
  height: 44px;
  padding-top: 8px;
}

.plus {
  width: 18px;
  font-size: 24px;
  font-weight: 400;
  letter-spacing: 0;
  line-height: 1;
  text-align: center;
}

.add-list {
  width: 272px;
  height: 40px;
  flex: none;
  display: flex;
  align-items: center;
  padding-left: 14px;
  border-radius: 3px;
  background: #0067a3;
  color: #d3e6f2;
  letter-spacing: -0.05px;
}

/* Side panel */
.side {
  width: 339px;
  flex: none;
  background: #f4f5f7;
}

.side-head {
  height: 48px;
  margin: 0 6px 0 12px;
  display: flex;
  align-items: center;
  justify-content: space-between;
  padding: 0 10px 0 11px;
  border-bottom: 1px solid #d6d9de;
  font-size: 16px;
  font-weight: 700;
  letter-spacing: -0.1px;
}

.side-x {
  width: 12px;
  height: 12px;
  color: #42526e;
}

.side-heading {
  height: 20px;
  margin-top: 20px;
  padding-left: 12px;
  display: flex;
  align-items: center;
  font-size: 16px;
  font-weight: 700;
  letter-spacing: 0;
}

.side-heading.desc {
  margin-top: 28px;
}

.side-icon {
  width: 32px;
  margin-right: 8px;
  display: flex;
  justify-content: center;
}

.side-members {
  display: flex;
  margin: 12px 0 0 20px;
}

.side-members .avatar + .avatar {
  margin-left: -2px;
}

.desc-box {
  width: 305px;
  height: 88px;
  margin: 18px 0 0 20px;
  padding: 9px 12px;
  line-height: 20px;
  border-radius: 3px;
  background: #ebecf0;
}

.side-rule {
  width: 313px;
  height: 1px;
  margin: 48px 0 0 12px;
  border: 0;
  background: #d6d9de;
}

.side-label {
  margin: 29px 0 0 20px;
  font-size: 12px;
  line-height: 16px;
  font-weight: 700;
  letter-spacing: 0.2px;
  color: #6b778c;
}

.perm {
  margin: 21px 0 0 25px;
  height: 20px;
  display: flex;
  align-items: center;
  gap: 8px;
  font-weight: 700;
  letter-spacing: -0.5px;
  color: #6b778c;
}

.perm-link {
  display: block;
  margin: 29px 0 0 24px;
  color: #6b778c;
  letter-spacing: -0.3px;
  text-decoration: underline;
}

.hscroll {
  width: 1475px;
  height: 5px;
  margin-top: 7px;
  flex: none;
  background: #bb7058;
}
```
